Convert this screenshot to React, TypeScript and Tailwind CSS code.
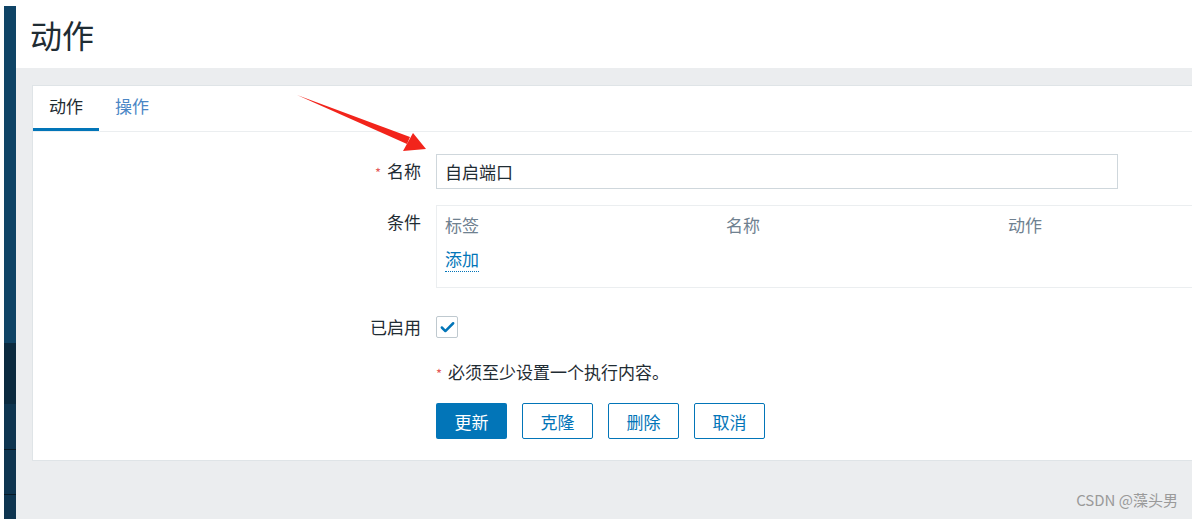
import { Check } from "lucide-react";

const font = { fontFamily: '"Noto Sans CJK SC", "Noto Sans", sans-serif' };

const Label = ({ children, req }: { children: React.ReactNode; req?: boolean }) => (
  <div className="w-[403px] shrink-0 pr-[15px] text-right text-[17px] leading-[24px] text-[#1f2c33]">
    {req && <span className="mr-[6px] text-[13px] text-[#e45959]">*</span>}
    {children}
  </div>
);

const Btn = ({ children, primary }: { children: React.ReactNode; primary?: boolean }) => (
  <button
    className={
      primary
        ? "h-[36px] w-[71px] rounded-[2px] bg-[#0275b8] text-[17px] leading-none text-white"
        : "h-[36px] w-[71px] rounded-[2px] border border-[#0275b8] bg-white text-[17px] leading-none text-[#0275b8]"
    }
  >
    {children}
  </button>
);

export default function App() {
  return (
    <div className="flex h-[519px] w-[1192px] overflow-hidden bg-white" style={font}>
      <div className="ml-[4px] mt-[6px] flex w-[12px] shrink-0 flex-col">
        <div className="h-[337px] bg-[#0f4466]" />
        <div className="h-[61px] bg-[#0b2a3f]" />
        <div className="h-[45px] bg-[#0e3550]" />
        <div className="h-[1px] bg-[#061824]" />
        <div className="h-[44px] bg-[#0e3550]" />
        <div className="h-[1px] bg-[#061824]" />
        <div className="flex-1 bg-[#0e3550]" />
      </div>
      <div className="flex flex-1 flex-col">
        <div className="flex h-[68px] items-center pl-[14px] text-[32px] text-[#1f2c33]">动作</div>
        <div className="relative flex-1 bg-[#ebedef] pl-[16px] pt-[17px]">
          <div className="h-[376px] border border-r-0 border-[#dfe4e7] bg-white">
            <div className="flex h-[46px] border-b border-[#ebeef0] text-[17px]">
              <div className="flex w-[66px] items-center justify-center border-b-[3px] border-[#0275b8] pb-[2px] text-[#1f2c33]">动作</div>
              <div className="flex w-[66px] items-center justify-center pb-[5px] text-[#4a86c5]">操作</div>
            </div>
            <div className="flex flex-col pt-[22px]">
              <div className="flex items-center">
                <Label req>名称</Label>
                <div className="flex h-[35px] w-[682px] items-center border border-[#cfd7dc] px-[8px] text-[17px] text-[#1f2c33]">
                  自启端口
                </div>
              </div>
              <div className="mt-[16px] flex items-start">
                <div className="pt-[5px]">
                  <Label>条件</Label>
                </div>
                <div className="h-[83px] flex-1 border border-r-0 border-[#ebeef0] px-[8px] pt-[7px] text-[17px] leading-[24px]">
                  <div className="grid grid-cols-[281px_282px_1fr] text-[#6f8190]">
                    <span>标签</span>
                    <span>名称</span>
                    <span>动作</span>
                  </div>
                  <div className="mt-[10px]">
                    <span className="border-b border-dotted border-[#0275b8] text-[#0275b8]">添加</span>
                  </div>
                </div>
              </div>
              <div className="mt-[27px] flex items-center">
                <Label>已启用</Label>
                <div className="flex h-[22px] w-[22px] items-center justify-center rounded-[2px] border border-[#bfc9cf]">
                  <Check size={17} strokeWidth={3.5} className="text-[#0275b8]" />
                </div>
              </div>
              <div className="ml-[403px] mt-[21px] text-[17px] leading-[24px] text-[#1f2c33]">
                <span className="mr-[6px] text-[13px] text-[#e45959]">*</span>必须至少设置一个执行内容。
              </div>
              <div className="ml-[403px] mt-[17px] flex gap-[15px]">
                <Btn primary>更新</Btn>
                <Btn>克隆</Btn>
                <Btn>删除</Btn>
                <Btn>取消</Btn>
              </div>
            </div>
          </div>
          <div className="absolute bottom-[8px] right-[14px] text-[15px] text-[#9a9a9a]">CSDN @藻头男</div>
        </div>
      </div>
      <svg className="pointer-events-none absolute left-0 top-0" width="1192" height="519">
        <polygon points="297,95 410,137 407,144" fill="#f2241b" />
        <polygon points="426,149 403,151 413,133" fill="#f2241b" />
      </svg>
    </div>
  );
}
